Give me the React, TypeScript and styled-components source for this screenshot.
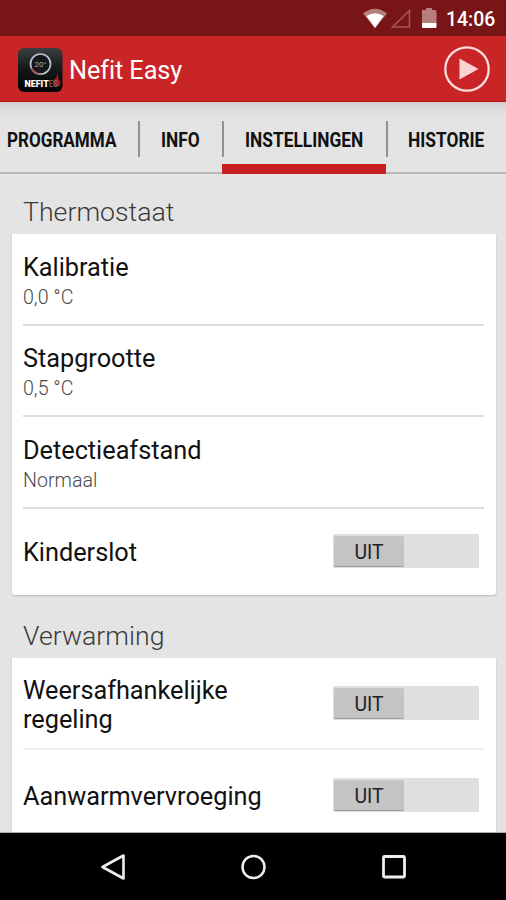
import React from 'react';
import styled, { createGlobalStyle } from 'styled-components';

const GlobalStyle = createGlobalStyle`
  * { box-sizing: border-box; }
  body { margin: 0; background: #e4e4e4; font-family: Roboto, "Liberation Sans", sans-serif; }
`;

const Screen = styled.div`
  width: 506px;
  height: 900px;
  display: flex;
  flex-direction: column;
  overflow: hidden;
  background: #e4e4e4;
  color: #111;
`;

const StatusBar = styled.div`
  flex: none;
  height: 36px;
  display: flex;
  justify-content: flex-end;
  background: #781617;
`;

const StatusIcons = styled.svg`
  display: block;
  width: 80px;
  height: 36px;
`;

const Clock = styled.span`
  width: 64px;
  padding: 1px 0 0 4px;
  font-size: 19.4px;
  font-weight: 500;
  line-height: 38px;
  color: #fff;
  white-space: nowrap;
`;

const AppBar = styled.header`
  flex: none;
  height: 66px;
  display: flex;
  align-items: center;
  padding: 0 15px 0 17px;
  background: #c92426;
  border-bottom: 1px solid #c1100f;
`;

const AppIcon = styled.svg`
  display: block;
  width: 46px;
  height: 46px;
  margin-top: 2px;
`;

const AppTitle = styled.h1`
  flex: 1;
  margin: 5px 0 0 6px;
  font-size: 25.3px;
  font-weight: 400;
  line-height: 30px;
  letter-spacing: -0.1px;
  color: #fff;
`;

const PlayButton = styled.button`
  padding: 0;
  border: 0;
  background: none;
  margin-top: 1px;
  svg { display: block; }
`;

const Tabs = styled.nav`
  flex: none;
  height: 72px;
  display: grid;
  grid-template-columns: 138px 84px 163.5px 120.5px;
  background: linear-gradient(#cfcfcf 0, #dcdcdc 6px, #e3e3e3 16px, #e4e4e4 100%);
`;

const Tab = styled.a<{ $active?: boolean; $pad: number }>`
  display: flex;
  flex-direction: column;
  position: relative;
  padding: 27px 0 0 ${p => p.$pad}px;
  border-bottom: ${p => (p.$active ? '10px solid #c81f20' : '2px solid #b9b9b9')};
  white-space: nowrap;

  &:not(:first-child)::before {
    content: '';
    position: absolute;
    left: 0;
    top: 19px;
    width: 2px;
    height: 36px;
    background: #929292;
  }
`;

const TabLabel = styled.span<{ $scale: number }>`
  align-self: flex-start;
  font-size: 19.7px;
  line-height: 24px;
  font-weight: 700;
  transform: scaleX(${p => p.$scale});
  transform-origin: left;
`;

const Content = styled.main`
  flex: 1;
  min-height: 0;
  overflow: hidden;
  padding: 0 10.5px 0 12px;
  border-bottom: 1px solid #aaa;
`;

const SectionTitle = styled.h2<{ $height: number }>`
  height: ${p => p.$height}px;
  margin: 0;
  padding: 0 0 6px 11px;
  display: flex;
  align-items: flex-end;
  font-size: 26.7px;
  font-weight: 300;
  line-height: 32px;
  color: #3a3a3a;
`;

const Card = styled.section`
  padding: 0 11.5px 0 11px;
  background: #fff;
  border-radius: 0 0 3px 3px;
  box-shadow: 0 1px 2px rgba(0, 0, 0, 0.2);
`;

const Row = styled.div<{ $height: number; $line?: string }>`
  height: ${p => p.$height}px;
  display: flex;
  align-items: center;
  justify-content: space-between;
  padding-right: 5px;
  &:not(:first-child) { border-top: 2px solid ${p => p.$line ?? '#dcdcdc'}; }
`;

const RowText = styled.div<{ $drop?: number }>`
  width: 260px;
  padding-top: ${p => p.$drop ?? 0}px;
`;

const RowName = styled.div`
  font-size: 25.3px;
  line-height: 29px;
  letter-spacing: -0.02px;
`;

const RowValue = styled.div`
  margin-top: 3px;
  font-size: 19.6px;
  font-weight: 300;
  line-height: 26px;
  color: #4a4a4a;
`;

const SwitchTrack = styled.button<{ $raise?: number }>`
  width: 146px;
  height: 34px;
  margin-bottom: ${p => p.$raise ?? 0}px;
  padding: 2px 0 1px 1px;
  border: 0;
  display: flex;
  background: #dfdfdf;
`;

const SwitchThumb = styled.span`
  width: 70px;
  height: 31px;
  padding-top: 1px;
  border-radius: 2px;
  border-bottom: 1px solid #999;
  background: #c4c4c4;
  font: 400 19.4px/31px Roboto, sans-serif;
  color: #222;
  text-align: center;
`;

const NavBar = styled.footer`
  flex: none;
  height: 67px;
  background: #000;
  display: flex;
  justify-content: space-between;
  align-items: center;
  padding: 0 97px;
  svg { display: block; }
`;

const Toggle = ({ raise }: { raise?: number }) => (
  <SwitchTrack type="button" role="switch" aria-checked={false} $raise={raise}>
    <SwitchThumb>UIT</SwitchThumb>
  </SwitchTrack>
);

const thermostat = [
  { name: 'Kalibratie', value: '0,0 °C', height: 90 },
  { name: 'Stapgrootte', value: '0,5 °C', height: 91 },
  { name: 'Detectieafstand', value: 'Normaal', height: 92 },
];

export default function App() {
  return (
    <Screen>
      <GlobalStyle />
      <StatusBar>
        <StatusIcons viewBox="0 0 80 36">
          <path d="M1 13.5 Q13 4 25 13.5 L13 28 Z" fill="#b77e7e" />
          <path d="M4.4 16 Q13 10.5 21.6 16 L13 28 Z" fill="#fff" />
          <path d="M30.5 27 L47.5 27 L47.5 10.5 Z" fill="none" stroke="#a25b5b" strokeWidth="1.5" />
          <path d="M60 10 H64 V8 H70 V10 H73 Q74.500 10 74.500 12 V23 H60 Z" fill="#b77e7e" />
          <path d="M60 23 H74.500 V27 Q74.500 28 73.500 28 H61 Q60 28 60 27 Z" fill="#fff" />
        </StatusIcons>
        <Clock>14:06</Clock>
      </StatusBar>

      <AppBar>
        <AppIcon viewBox="0 0 46 46">
          <defs>
            <linearGradient id="tile" x1="0" y1="0" x2="0" y2="1">
              <stop offset="0" stopColor="#3c3f41" />
              <stop offset="0.45" stopColor="#17191a" />
              <stop offset="1" stopColor="#020202" />
            </linearGradient>
          </defs>
          <rect x="1" y="1" width="44.500" height="44" rx="6" fill="url(#tile)" />
          <circle cx="23.500" cy="17" r="10" fill="#15191b" stroke="#b9c6cd" strokeWidth="1.700" />
          <path d="M14.500 21 A10 10 0 0 0 22 26.800" fill="none" stroke="#a84b46" strokeWidth="1.600" />
          <text x="23.500" y="20" textAnchor="middle" fontSize="8" fontFamily="Roboto" fill="#a5a5a5">20°</text>
          <path d="M36.500 39 Q35 33 39 31 L40.500 26.500 Q42 30 41 32 Q45 34 42.500 39 Z" fill="#a51c22" />
          <text x="7.500" y="39.500" textLength="33.500" lengthAdjust="spacingAndGlyphs" fontSize="9.500" fontWeight="900" fontFamily="Roboto" fill="#fff">NEFIT<tspan fontSize="8.500" fontWeight="400" fill="#8a6c6c">ES</tspan></text>
        </AppIcon>
        <AppTitle>Nefit Easy</AppTitle>
        <PlayButton type="button" aria-label="Afspelen">
          <svg width="48" height="48" viewBox="0 0 48 48">
            <circle cx="24" cy="24" r="21.700" fill="none" stroke="#fbdcdc" strokeWidth="2.300" />
            <path d="M16.500 13.500 L35.500 24 L16.500 34.500 Z" fill="#fbd3d3" />
          </svg>
        </PlayButton>
      </AppBar>

      <Tabs>
        <Tab $pad={7}><TabLabel $scale={0.868}>PROGRAMMA</TabLabel></Tab>
        <Tab $pad={23}><TabLabel $scale={0.88}>INFO</TabLabel></Tab>
        <Tab $pad={23} $active><TabLabel $scale={0.88}>INSTELLINGEN</TabLabel></Tab>
        <Tab $pad={22.5}><TabLabel $scale={0.88}>HISTORIE</TabLabel></Tab>
      </Tabs>

      <Content>
        <SectionTitle $height={60}>Thermostaat</SectionTitle>
        <Card>
          {thermostat.map(item => (
            <Row key={item.name} $height={item.height}>
              <RowText $drop={5}>
                <RowName>{item.name}</RowName>
                <RowValue>{item.value}</RowValue>
              </RowText>
            </Row>
          ))}
          <Row $height={88}>
            <RowText><RowName>Kinderslot</RowName></RowText>
            <Toggle raise={2} />
          </Row>
        </Card>
        <SectionTitle $height={63}>Verwarming</SectionTitle>
        <Card>
          <Row $height={90}>
            <RowText $drop={4}><RowName>Weersafhankelijke<br />regeling</RowName></RowText>
            <Toggle />
          </Row>
          <Row $height={92} $line="#eeeeee">
            <RowText $drop={2}><RowName>Aanwarmvervroeging</RowName></RowText>
            <Toggle />
          </Row>
        </Card>
      </Content>

      <NavBar>
        <svg width="32" height="32" viewBox="0 0 32 32">
          <path d="M5.500 16 L26.500 4.500 V27.500 Z" fill="none" stroke="#eee" strokeWidth="2.600" strokeLinejoin="round" />
        </svg>
        <svg width="32" height="32" viewBox="0 0 32 32">
          <circle cx="16.500" cy="16" r="11" fill="none" stroke="#eee" strokeWidth="2.500" />
        </svg>
        <svg width="32" height="32" viewBox="0 0 32 32">
          <rect x="6.500" y="5.500" width="21" height="20.500" rx="1" fill="none" stroke="#eee" strokeWidth="2.800" />
        </svg>
      </NavBar>
    </Screen>
  );
}
